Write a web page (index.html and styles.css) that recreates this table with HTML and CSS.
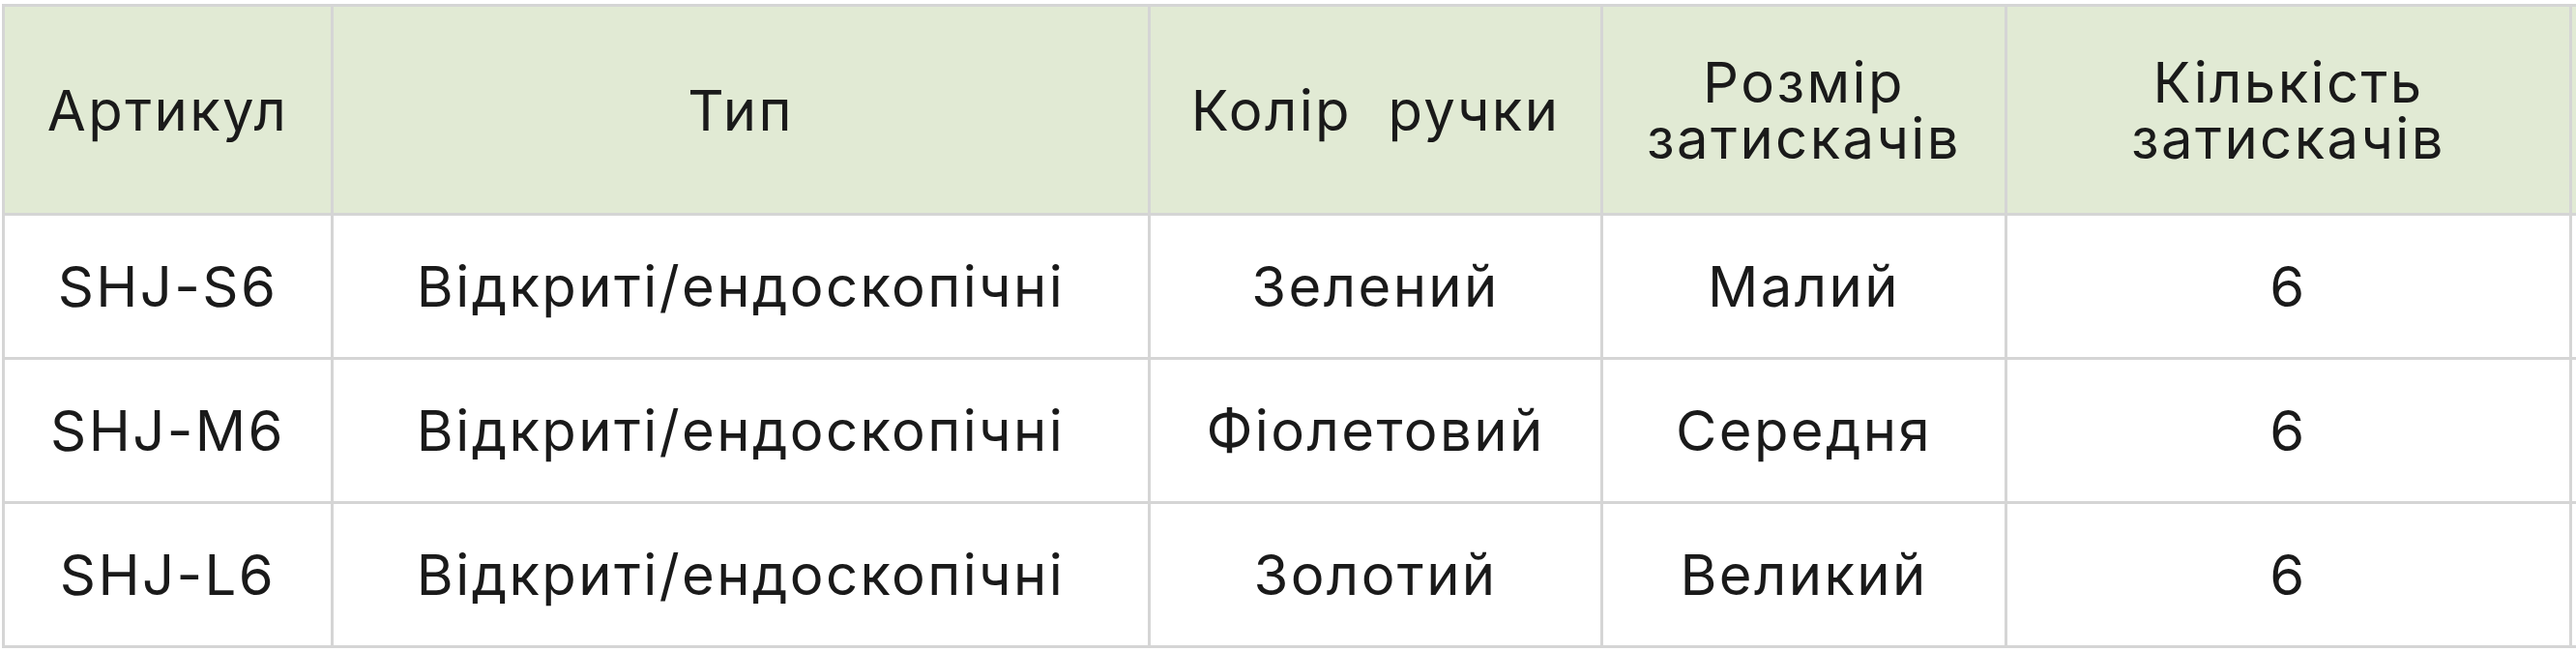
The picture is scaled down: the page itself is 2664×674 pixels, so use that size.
FILE: index.html
```html
<!DOCTYPE html>
<html lang="uk">
<head>
<meta charset="utf-8">
<title>Таблиця</title>
<link rel="stylesheet" href="styles.css">
</head>
<body>
<div class="wrap">
<table class="spec">
  <colgroup>
    <col class="c1"><col class="c2"><col class="c3"><col class="c4"><col class="c5"><col class="c6">
  </colgroup>
  <thead>
    <tr class="head">
      <th>Артикул</th>
      <th>Тип</th>
      <th>Колір&nbsp; ручки</th>
      <th><span class="ln">Розмір</span><span class="ln">затискачів</span></th>
      <th><span class="ln">Кількість</span><span class="ln">затискачів</span></th>
      <th></th>
    </tr>
  </thead>
  <tbody>
    <tr class="row">
      <td>SHJ-S6</td>
      <td>Відкриті/ендоскопічні</td>
      <td>Зелений</td>
      <td>Малий</td>
      <td>6</td>
      <td></td>
    </tr>
    <tr class="row">
      <td>SHJ-M6</td>
      <td>Відкриті/ендоскопічні</td>
      <td>Фіолетовий</td>
      <td>Середня</td>
      <td>6</td>
      <td></td>
    </tr>
    <tr class="row">
      <td>SHJ-L6</td>
      <td>Відкриті/ендоскопічні</td>
      <td>Золотий</td>
      <td>Великий</td>
      <td>6</td>
      <td></td>
    </tr>
  </tbody>
</table>
</div>
</body>
</html>
```
FILE: styles.css
```css
html, body {
  margin: 0;
  padding: 0;
  background: #ffffff;
  overflow: hidden;
}
.wrap {
  width: 2664px;
  height: 674px;
  overflow: hidden;
  padding: 4px 0 0 2px;
  box-sizing: border-box;
}
.spec {
  border-collapse: collapse;
  table-layout: fixed;
  width: 2856px;
  font-family: "Inter", "Noto Sans", sans-serif;
  font-size: 58px;
  line-height: 58px;
  letter-spacing: 2.4px;
  color: #1a1a1a;
}
.c1 { width: 340px; }
.c2 { width: 845px; }
.c3 { width: 468px; }
.c4 { width: 418px; }
.c5 { width: 584px; }
.c6 { width: 200px; }
.spec th, .spec td {
  border: 3px solid #d5d5d5;
  text-align: center;
  vertical-align: middle;
  padding: 0 4px;
  font-weight: 400;
  white-space: nowrap;
}
.head th {
  background: #e1ead4;
  height: 213px;
}
.ln {
  display: block;
  height: 58px;
}
.row td {
  height: 146px;
}
```
